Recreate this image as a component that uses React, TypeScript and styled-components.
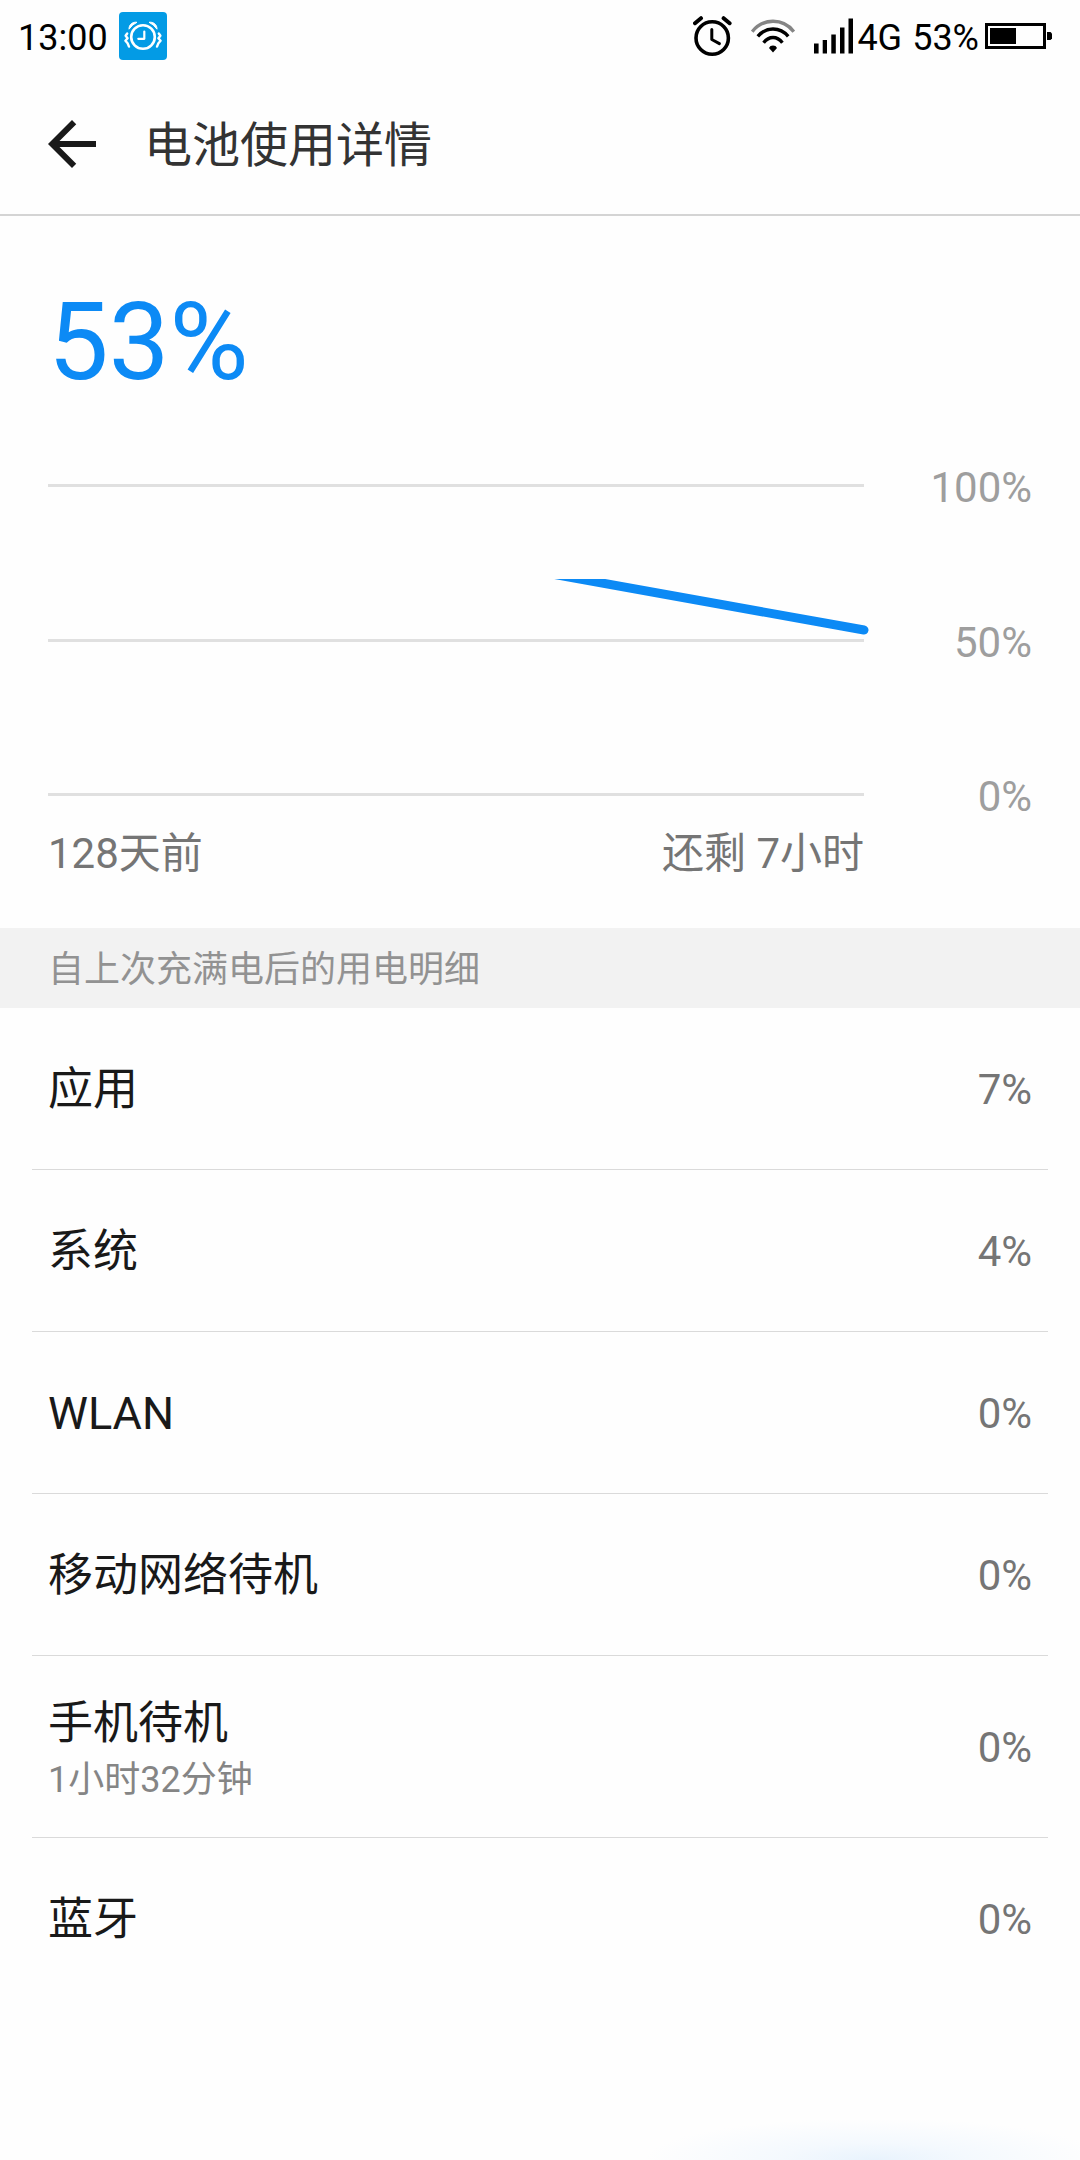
import React from "react";
import styled, { createGlobalStyle } from "styled-components";

const color = {
  page: "#fefefe",
  accent: "#0c8af5",
  title: "#333333",
  text: "#191919",
  secondary: "#757575",
  tertiary: "#858585",
  axis: "#9e9e9e",
  section: "#929292",
  band: "#f2f2f2",
  grid: "#e0e0e0",
  divider: "#dadada",
};

const GlobalStyle = createGlobalStyle`
  *, *::before, *::after { box-sizing: border-box; }
  body {
    margin: 0;
    background: ${color.page};
    color: ${color.text};
    font-family: Roboto, "Noto Sans CJK SC", sans-serif;
  }
  h1, h2, p, ul { margin: 0; padding: 0; font-weight: 400; }
  svg { display: block; flex: none; }
`;

const Page = styled.div`
  min-height: 100vh;
  display: flex;
  flex-direction: column;
`;

const StatusBar = styled.div`
  display: flex;
  justify-content: space-between;
  align-items: center;
  height: 72px;
  padding: 0 28px 0 18px;
  color: #000;
`;

const StatusGroup = styled.div<{ $gap: number }>`
  display: flex;
  align-items: center;
  gap: ${(p) => p.$gap}px;
`;

const StatusText = styled.span`
  padding-top: 4px;
  font-size: 36px;
  line-height: 42px;
`;

const Header = styled.header`
  display: flex;
  align-items: center;
  gap: 36px;
  height: 144px;
  padding: 2px 36px 0;
  border-bottom: 2px solid #d4d4d4;
`;

const BackButton = styled.button`
  padding: 0;
  border: 0;
  background: none;
  color: ${color.text};
  cursor: pointer;
`;

const Title = styled.h1`
  padding-top: 4px;
  font-size: 48px;
  line-height: 60px;
  color: ${color.title};
`;

const Summary = styled.section`
  padding: 70px 48px 49px;
`;

const Level = styled.p`
  font-size: 108px;
  line-height: 112px;
  color: ${color.accent};
`;

const Chart = styled.div`
  display: flex;
  align-items: flex-start;
  margin-top: 65px;
`;

const Plot = styled.div`
  position: relative;
  flex: 1;
  display: flex;
  flex-direction: column;
  justify-content: space-between;
  height: 312px;
  margin-top: 21px;
`;

const GridLine = styled.div`
  height: 3px;
  background: ${color.grid};
`;

const Curve = styled.svg`
  position: absolute;
  top: 0;
  left: 0;
  width: 100%;
  height: 100%;
  overflow: visible;
`;

const AxisLabels = styled.div`
  display: flex;
  flex-direction: column;
  justify-content: space-between;
  width: 168px;
  height: 358px;
  font-size: 42px;
  line-height: 49px;
  text-align: right;
  color: ${color.axis};
`;

const TimeLabels = styled.div`
  display: flex;
  justify-content: space-between;
  margin: 8px 168px 0 0;
  font-size: 42px;
  line-height: 50px;
  color: ${color.secondary};
`;

const SectionTitle = styled.h2`
  padding: 4px 48px 0;
  background: ${color.band};
  font-size: 36px;
  line-height: 76px;
  color: ${color.section};
`;

const UsageList = styled.ul`
  list-style: none;
  padding: 0 32px;
`;

const UsageItem = styled.li`
  & + & {
    border-top: 1px solid ${color.divider};
  }
`;

const UsageRow = styled.button<{ $tall?: boolean }>`
  display: flex;
  align-items: center;
  justify-content: space-between;
  width: 100%;
  height: ${(p) => (p.$tall ? 181 : 161)}px;
  padding: 0 16px;
  border: 0;
  background: none;
  font: inherit;
  color: inherit;
  text-align: left;
  cursor: pointer;
`;

const UsageText = styled.span`
  display: flex;
  flex-direction: column;
  padding-top: 2px;
`;

const UsageName = styled.span`
  font-size: 45px;
  line-height: 64px;
`;

const UsageNote = styled.span`
  font-size: 36px;
  line-height: 48px;
  color: ${color.tertiary};
`;

const UsageValue = styled.span`
  padding-top: 2px;
  font-size: 42px;
  line-height: 50px;
  color: ${color.secondary};
`;

const TouchGlow = styled.div`
  height: 40px;
  margin-top: auto;
  background: radial-gradient(
    ellipse 230px 42px at 81% 100%,
    #e8f3fd 0%,
    #f4f9fe 40%,
    #fafcfe 75%,
    ${color.page} 100%
  );
`;

const AlarmBadge = () => (
  <svg width="48" height="48" viewBox="0 0 48 48" aria-hidden="true">
    <rect width="48" height="48" rx="4" fill="#039be5" />
    <g fill="none" stroke="#fff" strokeLinecap="round" strokeLinejoin="round">
      <circle cx="24" cy="25" r="11.8" strokeWidth="2.6" />
      <path d="M25.3 19.5V26.8H19.3" strokeWidth="2.2" />
      <path d="M8.2 21.5L6.6 23.8L8.6 26.2L6.4 28.8L8.6 31.2L10 34.6" strokeWidth="2.4" />
      <path d="M39.8 21.5L41.4 23.8L39.4 26.2L41.6 28.8L39.4 31.2L38 34.6" strokeWidth="2.4" />
    </g>
    <path d="M10 17.2C9.8 12.6 13.6 9.6 18 10.3Q13.4 12.4 10 17.2Z" fill="#fff" stroke="#fff" />
    <path d="M38 17.2C38.2 12.6 34.4 9.6 30 10.3Q34.6 12.4 38 17.2Z" fill="#fff" stroke="#fff" />
  </svg>
);

const AlarmIcon = () => (
  <svg width="39" height="40" viewBox="0 0 39 40" aria-hidden="true">
    <g fill="none" stroke="#000" strokeLinecap="round" strokeLinejoin="round">
      <circle cx="19.2" cy="22" r="16.2" strokeWidth="3.6" />
      <path d="M18.8 13.5V23.5L26.4 27.6" strokeWidth="3" />
      <path d="M2 7.2L8 2.2M30.6 2.2L36.6 7.2" strokeWidth="4" />
    </g>
  </svg>
);

const WifiIcon = () => (
  <svg width="44" height="34" viewBox="0 0 44 34" aria-hidden="true">
    <g fill="none" strokeWidth="3.4">
      <path d="M1.2 12.6C12 -1.2 32 -1.2 42.8 12.6" stroke="#858585" />
      <path d="M6.8 17.4C15 7.6 29 7.6 37.2 17.4" stroke="#000" />
      <path d="M12.6 23.8C18 16.8 26 16.8 31.4 23.8" stroke="#000" />
    </g>
    <path d="M22 26.6Q25 26.6 26 29L22 33.6L18 29Q19 26.6 22 26.6Z" fill="#000" />
  </svg>
);

const SignalIcon = () => (
  <svg width="39" height="36" viewBox="0 0 39 36" aria-hidden="true">
    <path
      d="M0 25.5h4.600V35.500H0zM8.700 22h4.300V35.500H8.700zM17.300 16.500h4.500V35.500h-4.500zM26 9.500h4.500V35.500H26zM34.500 0.500H39V35.500h-4.500z"
      fill="#000"
    />
  </svg>
);

const BatteryIcon = () => (
  <svg width="67" height="26" viewBox="0 0 67 26" aria-hidden="true">
    <rect x="1.5" y="1.5" width="58" height="23" fill="none" stroke="#000" strokeWidth="3" />
    <rect x="5" y="5" width="26" height="16" fill="#000" />
    <path d="M62 9h3.500l1.500 1.500v5L65.500 17H62z" fill="#000" />
  </svg>
);

const BackIcon = () => (
  <svg width="72" height="72" viewBox="0 0 24 24" fill="currentColor" aria-hidden="true">
    <path d="M20 11H7.830l5.590-5.590L12 4l-8 8 8 8 1.410-1.410L7.830 13H20v-2z" />
  </svg>
);

type Usage = { name: string; value: string; note?: string };

const usages: Usage[] = [
  { name: "应用", value: "7%" },
  { name: "系统", value: "4%" },
  { name: "WLAN", value: "0%" },
  { name: "移动网络待机", value: "0%" },
  { name: "手机待机", value: "0%", note: "1小时32分钟" },
  { name: "蓝牙", value: "0%" },
];

export default function App() {
  return (
    <Page lang="zh-CN">
      <GlobalStyle />
      <StatusBar>
        <StatusGroup $gap={11}>
          <StatusText>13:00</StatusText>
          <AlarmBadge />
        </StatusGroup>
        <StatusGroup $gap={19}>
          <AlarmIcon />
          <WifiIcon />
          <StatusGroup $gap={10}>
            <StatusGroup $gap={4}>
              <SignalIcon />
              <StatusText>4G</StatusText>
            </StatusGroup>
            <StatusGroup $gap={6}>
              <StatusText>53%</StatusText>
              <BatteryIcon />
            </StatusGroup>
          </StatusGroup>
        </StatusGroup>
      </StatusBar>

      <Header>
        <BackButton type="button" aria-label="返回">
          <BackIcon />
        </BackButton>
        <Title>电池使用详情</Title>
      </Header>

      <main>
        <Summary>
          <Level>53%</Level>
          <Chart>
            <Plot>
              <GridLine />
              <GridLine />
              <GridLine />
              <Curve viewBox="0 0 816 312" preserveAspectRatio="none" aria-hidden="true">
                <clipPath id="curve-clip">
                  <rect x="0" y="95" width="830" height="217" />
                </clipPath>
                <path
                  d="M476 85L816 146"
                  fill="none"
                  stroke={color.accent}
                  strokeWidth="9"
                  strokeLinecap="round"
                  clipPath="url(#curve-clip)"
                />
              </Curve>
            </Plot>
            <AxisLabels>
              <span>100%</span>
              <span>50%</span>
              <span>0%</span>
            </AxisLabels>
          </Chart>
          <TimeLabels>
            <span>128天前</span>
            <span>还剩 7小时</span>
          </TimeLabels>
        </Summary>

        <SectionTitle>自上次充满电后的用电明细</SectionTitle>
        <UsageList>
          {usages.map((u) => (
            <UsageItem key={u.name}>
              <UsageRow type="button" $tall={Boolean(u.note)}>
                <UsageText>
                  <UsageName>{u.name}</UsageName>
                  {u.note && <UsageNote>{u.note}</UsageNote>}
                </UsageText>
                <UsageValue>{u.value}</UsageValue>
              </UsageRow>
            </UsageItem>
          ))}
        </UsageList>
      </main>

      <TouchGlow />
    </Page>
  );
}
